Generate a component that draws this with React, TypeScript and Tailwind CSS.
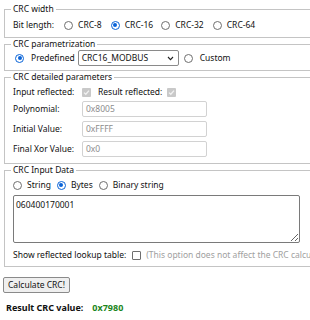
import React from "react";

function Radio({ checked, className = "" }: { checked?: boolean; className?: string }) {
  return checked ? (
    <span className={"w-[9px] h-[9px] rounded-full border-[1.5px] border-[#0a64d8] bg-white flex items-center justify-center shrink-0 " + className}>
      <span className="block w-[4px] h-[4px] rounded-full bg-[#0a64d8]" />
    </span>
  ) : (
    <span className={"block w-[9px] h-[9px] rounded-full border border-[#6f6f6f] bg-white shrink-0 " + className} />
  );
}

function CheckDisabled({ className = "" }: { className?: string }) {
  return (
    <span className={"w-[9px] h-[9px] rounded-[1px] bg-[#c9c9c9] flex items-center justify-center shrink-0 " + className}>
      <svg width="7" height="7" viewBox="0 0 7 7">
        <polyline points="1,3.6 2.8,5.3 6,1.6" fill="none" stroke="#f2f2f2" strokeWidth="1.3" />
      </svg>
    </span>
  );
}

function Field({ value }: { value: string }) {
  return (
    <div className="w-[125px] h-[16px] border border-[#d2d2d2] rounded-[2px] bg-white flex items-center pl-[3px] text-[#8c8c8c]">
      {value}
    </div>
  );
}

export default function App() {
  return (
    <div className="w-[310px] h-[320px] overflow-hidden bg-white font-['Noto_Sans',sans-serif] text-[8.5px] leading-[12px] text-[#111]">
      <div className="w-[380px] pl-[3px] pt-[3px]">
        <fieldset className="ml-[1px] border border-[#c4c4c4] px-[6px] pt-[3px] pb-[5px]">
          <legend className="px-[2px] leading-[12px]">CRC width</legend>
          <div className="flex items-center h-[14px] pl-[2px]">
            <span>Bit length:</span>
            <Radio className="ml-[10px]" />
            <span className="ml-[5px]">CRC-8</span>
            <Radio checked className="ml-[9px]" />
            <span className="ml-[5px]">CRC-16</span>
            <Radio className="ml-[8px]" />
            <span className="ml-[5px]">CRC-32</span>
            <Radio className="ml-[9px]" />
            <span className="ml-[5px]">CRC-64</span>
          </div>
        </fieldset>

        <fieldset className="ml-[1px] border border-[#c4c4c4] px-[6px] pt-0 pb-[4px]">
          <legend className="px-[2px] leading-[12px]">CRC parametrization</legend>
          <div className="flex items-center h-[16px] pl-[4px]">
            <Radio checked />
            <span className="ml-[7px]">Predefined</span>
            <div className="ml-[3px] w-[101px] h-[16px] border border-[#8a8a8a] rounded-[2px] bg-white flex items-center justify-between pl-[3px] pr-[4px]">
              <span>CRC16_MODBUS</span>
              <svg width="7" height="5" viewBox="0 0 7 5">
                <polyline points="1,1 3.5,3.6 6,1" fill="none" stroke="#222" strokeWidth="1.1" />
              </svg>
            </div>
            <Radio className="ml-[5px]" />
            <span className="ml-[7px]">Custom</span>
          </div>
        </fieldset>

        <fieldset className="ml-[1px] border border-[#c4c4c4] px-[6px] pt-[2px] pb-[6px]">
          <legend className="px-[2px] leading-[12px]">CRC detailed parameters</legend>
          <div className="flex items-center h-[14px] pl-[2px]">
            <span className="w-[69px]">Input reflected:</span>
            <CheckDisabled />
            <span className="ml-[7px]">Result reflected:</span>
            <CheckDisabled className="ml-[5px]" />
          </div>
          <div className="flex items-center h-[16px] pl-[2px] mt-[2px]">
            <span className="w-[69px]">Polynomial:</span>
            <Field value="0x8005" />
          </div>
          <div className="flex items-center h-[16px] pl-[2px] mt-[4px]">
            <span className="w-[69px]">Initial Value:</span>
            <Field value="0xFFFF" />
          </div>
          <div className="flex items-center h-[16px] pl-[2px] mt-[4px]">
            <span className="w-[69px]">Final Xor Value:</span>
            <Field value="0x0" />
          </div>
        </fieldset>

        <fieldset className="ml-[1px] border border-[#c4c4c4] px-[6px] pt-[2px] pb-[4px]">
          <legend className="px-[2px] leading-[12px]">CRC Input Data</legend>
          <div className="flex items-center h-[14px] pl-[2px]">
            <Radio />
            <span className="ml-[5px]">String</span>
            <Radio checked className="ml-[6px]" />
            <span className="ml-[5px]">Bytes</span>
            <Radio className="ml-[6px]" />
            <span className="ml-[5px]">Binary string</span>
          </div>
          <div className="pl-[2px] mt-[3px]">
            <textarea
              readOnly
              defaultValue="060400170001"
              className="block w-[287px] h-[48px] border border-[#7a7a7a] rounded-[2px] bg-white px-[2px] py-[3px] text-[8.5px] leading-[11px] text-[#111] font-['Noto_Sans',sans-serif] outline-none"
            />
          </div>
          <div className="flex items-center h-[14px] pl-[2px] mt-[5px] whitespace-nowrap">
            <span>Show reflected lookup table:</span>
            <span className="block ml-[6px] w-[9px] h-[9px] rounded-[1px] border border-[#6f6f6f] bg-white shrink-0" />
            <span className="ml-[5px] text-[#a0a0a0]">(This option does not affect the CRC calculation, only the displayed table)</span>
          </div>
        </fieldset>

        <div className="mt-[10px]">
          <button className="h-[16px] px-[4px] border border-[#8a8a8a] rounded-[2px] bg-[#efefef] text-[8.5px] leading-[12px] text-[#111] font-['Noto_Sans',sans-serif]">
            Calculate CRC!
          </button>
        </div>

        <div className="mt-[8px] h-[14px] flex items-center pl-[3px] font-bold text-[9px]">
          <span>Result CRC value:</span>
          <span className="ml-[9px] text-[#1c861c]">0x7980</span>
        </div>
      </div>
    </div>
  );
}
